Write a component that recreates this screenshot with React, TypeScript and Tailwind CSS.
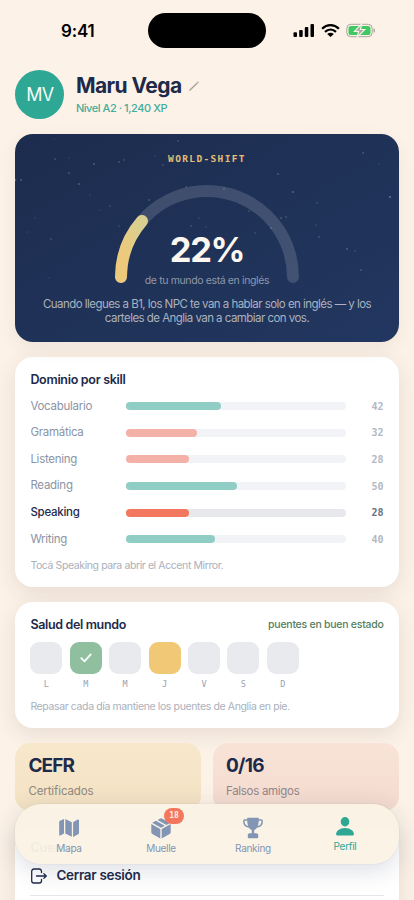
import { FC, JSX, ReactNode } from "react";

interface Skill {
  name: string;
  value: number;
  progress: number;
  bar: string;
  active?: boolean;
}

const skills: Array<Skill> = [
  { name: "Vocabulario", value: 42, progress: 42.9, bar: "bg-[#90cdc4]" },
  { name: "Gramática", value: 32, progress: 32.2, bar: "bg-[#f4b1a7]" },
  { name: "Listening", value: 28, progress: 28.6, bar: "bg-[#f4b1a7]" },
  { name: "Reading", value: 50, progress: 50.1, bar: "bg-[#90cdc4]" },
  { name: "Speaking", value: 28, progress: 28.6, bar: "bg-[#f3765f]", active: true },
  { name: "Writing", value: 40, progress: 40.1, bar: "bg-[#90cdc4]" },
];

const days = [
  { label: "L", color: "bg-[#e9eaee]" },
  { label: "M", color: "bg-[#8fbf9f]", done: true },
  { label: "M", color: "bg-[#e9eaee]" },
  { label: "J", color: "bg-[#f1c875]" },
  { label: "V", color: "bg-[#e9eaee]" },
  { label: "S", color: "bg-[#e9eaee]" },
  { label: "D", color: "bg-[#e9eaee]" },
];

// x, y, opacity
const stars = [
  [40, 25, 0.35], [79, 30, 0.45], [109, 26, 0.3], [104, 28, 0.35], [54, 39, 0.4],
  [64, 50, 0.45], [6, 46, 0.45], [0.5, 46, 0.4], [163, 7, 0.35], [134, 66, 0.4],
  [148, 31, 0.3], [171, 53, 0.35], [95, 72, 0.3], [75, 61, 0.15], [36, 105, 0.35],
  [104, 92, 0.25], [20, 84, 0.15], [12, 98, 0.15], [34, 144, 0.15], [39, 5, 0.1],
  [140, 22, 0.15], [184, 84, 0.2], [176, 92, 0.3], [191, 93, 0.2], [263, 40, 0.4],
  [278, 58, 0.5], [348, 19, 0.4], [364, 30, 0.15], [375, 63, 0.7], [302, 69, 0.25],
  [209, 55, 0.35], [234, 77, 0.3], [266, 84, 0.4], [271, 83, 0.3], [256, 94, 0.4],
  [301, 91, 0.2], [304, 103, 0.35], [332, 115, 0.45], [340, 117, 0.2], [240, 99, 0.25],
  [346, 136, 0.35], [85, 76, 0.12], [54, 24, 0.12],
];

const Card: FC<{ className: string; children: ReactNode }> = ({ className, children }) => (
  <section
    className={`w-full rounded-[18px] bg-white px-[15px] shadow-[0_6px_22px_rgba(70,45,50,0.11)] ${className}`}
  >
    {children}
  </section>
);

const StatusBar = () => (
  <div className="relative h-[62px] shrink-0 text-black">
    <span className="absolute top-[20px] left-[61px] text-[17px] leading-[22px] font-semibold tracking-[-0.2px]">
      9:41
    </span>
    <div className="absolute top-[13px] left-[148px] h-[35px] w-[118px] rounded-full bg-black" />
    <svg className="absolute top-[23px] left-[293px]" width="84" height="16" viewBox="0 0 84 16">
      <rect x="0.5" y="9.3" width="3.5" height="4.7" rx="1" />
      <rect x="6.2" y="7" width="3.5" height="7" rx="1" />
      <rect x="11.8" y="4" width="3.5" height="10" rx="1" />
      <rect x="17.5" y="1" width="3.5" height="13" rx="1" />
      <g fill="none" stroke="#000" strokeWidth="2.3">
        <path d="M29.1 5.7C34 .9 41 .9 45.9 5.7" />
        <path d="M32 8.8c3.3-3 7.7-3 11 0" />
      </g>
      <path d="M34.2 11c2-1.7 4.6-1.7 6.6 0l-3.3 3z" />
      <rect x="53.8" y="1.3" width="25.4" height="12.4" rx="4" fill="none" stroke="#aaa49d" />
      <rect x="55.5" y="3" width="22" height="9" rx="2.6" fill="#40c963" />
      <path d="M80.5 5.2c2 .6 2 4 0 4.6z" fill="#aaa49d" />
      <path
        d="M68.8.8 61.5 8.3h4.2l-1.7 6 7.7-7.8h-4.3z"
        fill="#aaa49d"
        stroke="#f4f3e9"
        strokeWidth="1.2"
      />
    </svg>
  </div>
);

const WorldShift = () => (
  <section className="relative flex h-[207.5px] shrink-0 flex-col items-center overflow-hidden rounded-[18px] bg-linear-to-br from-[#1c2c4e] to-[#223760] shadow-[0_6px_18px_rgba(90,60,40,0.07)]">
    <svg className="absolute inset-0" width="383" height="208">
      {stars.map(([x, y, o]) => (
        <circle key={`${x}-${y}`} cx={x} cy={y} r="0.8" fill="#cbd5e5" opacity={o} />
      ))}
    </svg>
    <h2 className="mt-[16.5px] font-['DejaVu_Sans_Mono'] text-[9.5px] leading-[15px] font-bold tracking-[1.35px] text-[#e6bf76]">
      WORLD-SHIFT
    </h2>
    <svg className="mt-[10.5px] shrink-0" width="196" height="112" viewBox="0 0 196 112">
      <defs>
        <linearGradient id="arc" x1="0" y1="1" x2="0.8" y2="0">
          <stop offset="0.3" stopColor="#edc97c" />
          <stop offset="1" stopColor="#d9cf90" />
        </linearGradient>
      </defs>
      <g fill="none" strokeWidth="12" strokeLinecap="round">
        <path d="M12 101a86 86 0 0 1 172 0" stroke="#fff" strokeOpacity="0.15" />
        <path d="M12 101A86 86 0 0 1 33 45" stroke="url(#arc)" />
      </g>
    </svg>
    <div className="relative -mt-[58px] text-[34.5px] leading-[40px] font-bold tracking-[-1.4px] text-[#fdf7ef]">
      22%
    </div>
    <p className="relative mt-[4px] text-[10.5px] leading-[14px] tracking-[-0.37px] text-[#8f98aa]">
      de tu mundo está en inglés
    </p>
    <p className="relative mt-[9px] text-center text-[11.5px] leading-[14.2px] tracking-[-0.54px] whitespace-nowrap text-[#abb2bf]">
      Cuando llegues a B1, los NPC te van a hablar solo en inglés — y los
      <br />
      carteles de Anglia van a cambiar con vos.
    </p>
  </section>
);

const SkillRow: FC<{ skill: Skill }> = ({ skill }) => (
  <div className="flex h-[26.6px] items-center">
    <span
      className={`w-[96px] text-[11.5px] tracking-[-0.27px] ${
        skill.active ? "font-medium text-[#1e2a4a]" : "text-[#8c94a4]"
      }`}
    >
      {skill.name}
    </span>
    <div className={`h-[8px] w-[220px] rounded-full ${skill.active ? "bg-[#e6e8ec]" : "bg-[#f2f3f6]"}`}>
      <div className={`h-full rounded-full ${skill.bar}`} style={{ width: `${skill.progress}%` }} />
    </div>
    <span
      className={`ml-auto font-['DejaVu_Sans_Mono'] text-[10px] font-bold ${
        skill.active ? "text-[#687286]" : "text-[#b3b8c4]"
      }`}
    >
      {skill.value}
    </span>
  </div>
);

const MapIcon = () => (
  <svg width="22" height="22" viewBox="0 0 22 22" fill="currentColor">
    <path d="M1.2 5.2c0-.7.3-1.1.9-1.4l3.9-1.9v14.7l-3.6 1.8c-.7.4-1.2.1-1.2-.7z" />
    <path d="m7.3 1.9 6.5 3.3v14.6l-6.5-3.4z" />
    <path d="m15.1 5.2 4.2-2.5c.9-.5 1.7-.1 1.7.8v12.3c0 .7-.3 1.2-.9 1.5l-5 2.7z" />
  </svg>
);

const BoxIcon = () => (
  <svg width="22" height="22" viewBox="0 0 22 22" fill="currentColor">
    <path d="m10.3 1.4-2.8 1.5 8.9 5 3.5-2-8-4.5a1.6 1.6 0 0 0-1.6 0zM5.9 3.8 2.2 5.8 11 10.8l3.8-2z" />
    <path d="M1.3 7v8c0 .9.3 1.5 1.1 2l7.9 4.4v-9.3zM20.7 7v8c0 .9-.3 1.5-1.1 2l-7.9 4.4v-9.3z" />
  </svg>
);

const TrophyIcon = () => (
  <svg width="22" height="22" viewBox="0 0 22 22" fill="currentColor">
    <path d="M6.2.8h9.6c.9 0 1.2.5 1.1 1.4-.2 5.3-1.3 9.5-4.7 10.8v3.2h2c1.2 0 2 .7 2 1.9v2.3c0 .5-.3.8-.8.8H6.6c-.5 0-.8-.3-.8-.8v-2.3c0-1.2.8-1.9 2-1.9h2V13C6.4 11.7 5.3 7.5 5.1 2.2 5 1.3 5.3.8 6.2.8z" />
    <path
      d="M5.5 3.1H2.7c-.6 0-.9.3-.9.9 0 3.3 2 5.6 5.2 6M16.5 3.1h2.8c.6 0 .9.3.9.9 0 3.3-2 5.6-5.2 6"
      fill="none"
      stroke="currentColor"
      strokeWidth="1.5"
    />
  </svg>
);

const PersonIcon = () => (
  <svg width="22" height="22" viewBox="0 0 22 22" fill="currentColor">
    <ellipse cx="11" cy="6.8" rx="4.3" ry="4.7" />
    <path d="M11 13c5.4 0 8.9 3.2 8.9 6 0 1-.7 1.5-1.9 1.5H4c-1.2 0-1.9-.5-1.9-1.5 0-2.8 3.5-6 8.9-6z" />
  </svg>
);

const NavItem: FC<{ label: string; className: string; children: ReactNode }> = ({
  label,
  className,
  children,
}) => (
  <div className={`flex w-[92px] flex-col items-center ${className}`}>
    <div className="relative h-[22px] w-[22px]">{children}</div>
    <span className="mt-[3px] text-[10px] leading-[13px] tracking-[-0.3px]">{label}</span>
  </div>
);

const App = (): JSX.Element => {
  return (
    <main className="relative flex h-[900px] w-[414px] flex-col overflow-hidden bg-[#fcf2e7] font-['Inter',sans-serif]">
      <StatusBar />

      <div className="flex flex-col px-[15.4px]">
        <header className="flex h-[72px] items-start pt-[8px]">
          <div className="flex h-[49px] w-[49px] items-center justify-center rounded-full bg-[#2ea795] text-[18px] tracking-[-0.7px] text-[#f3faf3]">
            MV
          </div>
          <div className="ml-[11.5px] pt-[2px]">
            <div className="flex items-center">
              <h1 className="text-[21px] leading-[28px] font-bold tracking-[-0.55px] text-[#1e2a4a]">
                Maru Vega
              </h1>
              <svg className="ml-[6.5px]" width="12" height="12" viewBox="0 0 12 12">
                <path d="M1.5 10.5 9.3 3" stroke="#aaa59f" strokeWidth="1.5" />
                <path d="m9.6 2.7.8-.8" stroke="#aaa59f" strokeWidth="1.7" />
              </svg>
            </div>
            <p className="mt-[1px] text-[11px] leading-[15px] font-medium tracking-[-0.45px] text-[#43ad9c]">
              Nivel A2 · 1,240 XP
            </p>
          </div>
        </header>

        <WorldShift />

        <Card className="mt-[15.5px] h-[229.5px] shrink-0 pt-[14px]">
          <h3 className="text-[12.5px] leading-[17px] font-semibold tracking-[-0.3px] text-[#1e2a4a]">
            Dominio por skill
          </h3>
          <div className="mt-[5px] flex flex-col">
            {skills.map((skill) => (
              <SkillRow key={skill.name} skill={skill} />
            ))}
          </div>
          <p className="mt-[6.5px] text-[10.5px] leading-[14px] tracking-[-0.4px] text-[#abb0bb]">
            Tocá Speaking para abrir el Accent Mirror.
          </p>
        </Card>

        <Card className="mt-[15px] h-[126px] shrink-0 pt-[14px]">
          <div className="flex items-center justify-between">
            <h3 className="text-[12.5px] leading-[17px] font-semibold tracking-[-0.35px] text-[#1e2a4a]">
              Salud del mundo
            </h3>
            <span className="text-[10.5px] leading-[17px] font-medium tracking-[-0.25px] text-[#55805f]">
              puentes en buen estado
            </span>
          </div>
          <div className="mt-[9px] flex gap-[7.4px]">
            {days.map(({ label, color, done }, i) => (
              <div key={i} className="flex flex-col items-center">
                <div className={`flex h-[32px] w-[32px] items-center justify-center rounded-[9px] ${color}`}>
                  {done && (
                    <svg width="12" height="10" viewBox="0 0 12 10" fill="none">
                      <path
                        d="m1.3 5.2 3.2 3.2 6.2-7"
                        stroke="#fff"
                        strokeWidth="1.8"
                        strokeLinecap="round"
                        strokeLinejoin="round"
                      />
                    </svg>
                  )}
                </div>
                <span className="mt-[5px] font-['DejaVu_Sans_Mono'] text-[8.5px] leading-[11px] text-[#9ba1af]">
                  {label}
                </span>
              </div>
            ))}
          </div>
          <p className="mt-[10px] text-[10.5px] leading-[14px] tracking-[-0.38px] text-[#abb0bb]">
            Repasar cada día mantiene los puentes de Anglia en pie.
          </p>
        </Card>

        <div className="mt-[15px] flex shrink-0 gap-[12px]">
          <div className="h-[68px] flex-1 rounded-[15px] bg-linear-to-b from-[#f8e8cb] to-[#f3e1c3] pt-[11px] pl-[13px]">
            <div className="text-[19px] leading-[24px] font-bold tracking-[-0.9px] text-[#1e2a4a]">CEFR</div>
            <div className="mt-[5px] text-[11.5px] leading-[16px] tracking-[-0.1px] text-[#8f897f]">Certificados</div>
          </div>
          <div className="h-[68px] flex-1 rounded-[15px] bg-linear-to-b from-[#f9e3d7] to-[#f3dacf] pt-[11px] pl-[13px]">
            <div className="text-[19px] leading-[24px] font-bold tracking-[-0.7px] text-[#1e2a4a]">0/16</div>
            <div className="mt-[5px] text-[11.5px] leading-[16px] tracking-[-0.3px] text-[#92868a]">Falsos amigos</div>
          </div>
        </div>

        <Card className="mt-[17px] h-[120px] shrink-0 pt-[11px]">
          <h3 className="text-[12.5px] leading-[17px] font-semibold text-[#1e2a4a]">Cuenta</h3>
          <div className="mt-[1px] flex h-[39px] items-center border-b border-[#e3e5ea] text-[#1e2a4a]">
            <svg
              width="18"
              height="16"
              viewBox="0 0 18 16"
              fill="none"
              stroke="currentColor"
              strokeWidth="1.3"
              strokeLinecap="round"
              strokeLinejoin="round"
            >
              <path d="M11.5 4.5V3.3C11.5 1.8 10.7 1 9.2 1H4C2.5 1 1.7 1.8 1.7 3.3v9.4C1.7 14.2 2.5 15 4 15h5.2c1.5 0 2.3-.8 2.3-2.3v-1.2" />
              <path d="M6.5 8h9.7M13.8 5.6 16.3 8l-2.5 2.4" />
            </svg>
            <span className="ml-[8px] text-[13.5px] font-semibold tracking-[-0.3px]">Cerrar sesión</span>
          </div>
        </Card>
      </div>

      <nav className="absolute top-[804px] left-[15.4px] flex h-[59.5px] w-[383.2px] rounded-[26px] bg-[#faf2e5]/96 px-[7.6px] shadow-[0_0_1px_rgba(80,70,60,0.3),0_6px_24px_rgba(30,42,74,0.16)]">
        <NavItem label="Mapa" className="pt-[12.5px] text-[#8295b4]">
          <MapIcon />
        </NavItem>
        <NavItem label="Muelle" className="pt-[13px] text-[#8295b4]">
          <BoxIcon />
          <span className="absolute -top-[9px] left-[14px] flex h-[16px] w-[20px] items-center justify-center rounded-full bg-[#f3765f] font-['DejaVu_Sans_Mono'] text-[8px] font-bold text-[#fdeee4]">
            18
          </span>
        </NavItem>
        <NavItem label="Ranking" className="pt-[13px] text-[#8295b4]">
          <TrophyIcon />
        </NavItem>
        <NavItem label="Perfil" className="pt-[11px] text-[#2ea795]">
          <PersonIcon />
        </NavItem>
      </nav>
    </main>
  );
};

export default App;
